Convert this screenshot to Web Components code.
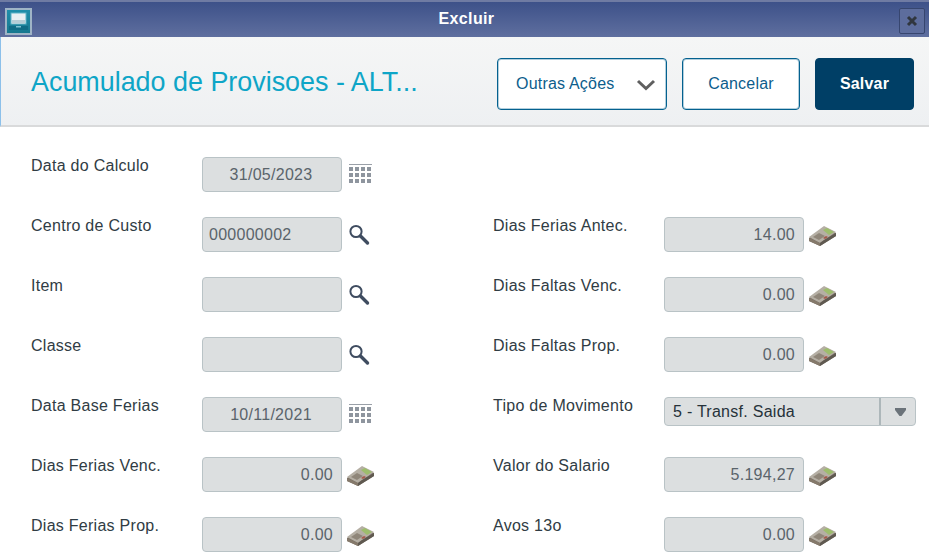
<!DOCTYPE html>
<html lang="pt">
<head>
<meta charset="utf-8">
<title>Excluir</title>
<style>
    html, body { margin: 0; height: 100%; overflow: hidden; background: #fff; }
    body { font-family: "Liberation Sans", Arial, sans-serif; }
    .form {
        display: grid;
        grid-template-columns: 462px 1fr;
        grid-auto-rows: 60px;
        padding: 30px 13px 0 31px;
    }
</style>
</head>
<body>
<template id="money-icon">
    <svg width="30" height="24" viewBox="0 0 30 24" style="margin-left:-1px">
        <path d="M2 15 L17 4 L29 10 L29 13 L13 23 L2 18 Z" fill="#7b7266"/>
        <path d="M2 14 L17 3 L29 9 L13 20 Z" fill="#b5afa4"/>
        <path d="M16 7 L20 5 L27 9 L22 12 Z" fill="#9dbd6c"/>
        <path d="M6 14 L12 10 L18 13 L12 17 Z" fill="#8f8679"/>
        <path d="M16 15 L19 13 L21 14 L18 16 Z" fill="#a5584a"/>
        <path d="M2 15 L13 20 L13 23 L2 18 Z" fill="#85796b"/>
        <path d="M17 17 L29 10 L29 13 L13 23 L13 20 Z" fill="#5f5950"/>
    </svg>
</template>
<template id="search-icon">
    <svg width="22" height="24" viewBox="0 0 22 24" style="margin-left:2px">
        <circle cx="8" cy="8.5" r="5.6" fill="#fff" fill-opacity=".55" stroke="#3f4c60" stroke-width="2"/>
        <path d="M12.5 13 L19.5 20" stroke="#3f4c60" stroke-width="3.4" stroke-linecap="round"/>
    </svg>
</template>
<template id="calendar-icon">
    <svg width="24" height="22" viewBox="0 0 24 22" fill="#8e959e" style="margin-left:3px">
        <rect x="0" y="1" width="23" height="1" fill="#9aa0a8"/>
        <path d="M0 4h4v4H0zM6 4h4v4H6zM12 4h4v4h-4zM18 4h4v4h-4zM0 10h4v4H0zM6 10h4v4H6zM12 10h4v4h-4zM18 10h4v4h-4zM0 16h4v4H0zM6 16h4v4H6zM12 16h4v4h-4zM18 16h4v4h-4z"/>
    </svg>
</template>

<title-bar>Excluir</title-bar>
<page-header heading="Acumulado de Provisoes - ALT...">
    <action-button menu>Outras Ações</action-button>
    <action-button style="width:118px">Cancelar</action-button>
    <action-button primary style="width:99px">Salvar</action-button>
</page-header>

<div class="form">
    <form-field label="Data do Calculo" value="31/05/2023" value-align="center" icon="calendar"></form-field>
    <div></div>
    <form-field label="Centro de Custo" value="000000002" icon="search"></form-field>
    <form-field label="Dias Ferias Antec." value="14.00" value-align="right" icon="money"></form-field>
    <form-field label="Item" icon="search"></form-field>
    <form-field label="Dias Faltas Venc." value="0.00" value-align="right" icon="money"></form-field>
    <form-field label="Classe" icon="search"></form-field>
    <form-field label="Dias Faltas Prop." value="0.00" value-align="right" icon="money"></form-field>
    <form-field label="Data Base Ferias" value="10/11/2021" value-align="center" icon="calendar"></form-field>
    <form-field label="Tipo de Movimento" value="5 - Transf. Saida" select></form-field>
    <form-field label="Dias Ferias Venc." value="0.00" value-align="right" icon="money"></form-field>
    <form-field label="Valor do Salario" value="5.194,27" value-align="right" icon="money"></form-field>
    <form-field label="Dias Ferias Prop." value="0.00" value-align="right" icon="money"></form-field>
    <form-field label="Avos 13o" value="0.00" value-align="right" icon="money"></form-field>
</div>

<script>
class TitleBar extends HTMLElement {
    constructor() {
        super();
        this.attachShadow({ mode: 'open' });
        this.shadowRoot.innerHTML = `
            <style>
                :host {
                    display: flex;
                    align-items: center;
                    justify-content: space-between;
                    box-sizing: border-box;
                    height: 37px;
                    padding: 3px 4px 0 5px;
                    border-top: 2px solid #6f7ba3;
                    background: linear-gradient(#3d5189, #5f6f9f);
                }
                .logo {
                    width: 27px;
                    height: 27px;
                    box-sizing: border-box;
                    border: 2px solid #9fb4c6;
                    background: linear-gradient(#1f8eaa, #17788f);
                    display: flex;
                    align-items: center;
                    justify-content: center;
                }
                .text {
                    color: #fff;
                    font-size: 16px;
                    letter-spacing: .35px;
                    font-weight: bold;
                    flex: 1;
                    text-align: center;
                    margin: -5px 0 0 2px;
                }
                .close {
                    width: 26px;
                    height: 26px;
                    box-sizing: border-box;
                    border: 1px solid #37466f;
                    border-radius: 2px;
                    background: #5d6d9d;
                    display: flex;
                    align-items: center;
                    justify-content: center;
                }
            </style>
            <div class="logo">
                <svg width="19" height="19" viewBox="0 0 19 19">
                    <rect x="2" y="1" width="15" height="11" fill="#e9eff2" stroke="#5fb4c8"/>
                    <rect x="3" y="8" width="13" height="3.5" fill="#b5cdd6"/>
                    <path d="M0 14h19v4H0z" fill="#0f6c86"/>
                    <path d="M7 14h5v1.5H7z" fill="#7fc2d3"/>
                </svg>
            </div>
            <div class="text"><slot></slot></div>
            <div class="close">
                <svg width="12" height="12" viewBox="0 0 12 12">
                    <path d="M2 2 L10 10 M10 2 L2 10" stroke="#30363f" stroke-width="3"/>
                </svg>
            </div>
        `;
    }
}

class PageHeader extends HTMLElement {
    constructor() {
        super();
        this.attachShadow({ mode: 'open' });
    }

    connectedCallback() {
        this.shadowRoot.innerHTML = `
            <style>
                :host {
                    display: flex;
                    align-items: center;
                    box-sizing: border-box;
                    height: 90px;
                    padding: 6px 15px 0 30px;
                    background: linear-gradient(#f5f6f6, #eef0f2);
                    border-bottom: 2px solid #d9dadb;
                    border-left: 1px solid #8cc0ea;
                }
                h1 {
                    flex: 1;
                    margin: -4px 0 0 0;
                    font-size: 26.9px;
                    font-weight: normal;
                    color: #0ea5c7;
                }
                .actions { display: flex; gap: 15px; }
            </style>
            <h1>${this.getAttribute('heading')}</h1>
            <div class="actions"><slot></slot></div>
        `;
    }
}

class ActionButton extends HTMLElement {
    constructor() {
        super();
        this.attachShadow({ mode: 'open' });
    }

    connectedCallback() {
        const chevron = this.hasAttribute('menu') ? `
            <svg class="chevron" width="20" height="12" viewBox="0 0 20 12">
                <path d="M2 2 L10 9.5 L18 2" fill="none" stroke="#5f5f5f" stroke-width="3"/>
            </svg>` : '';
        this.shadowRoot.innerHTML = `
            <style>
                :host {
                    display: flex;
                    align-items: center;
                    justify-content: center;
                    box-sizing: border-box;
                    height: 52px;
                    border: 1px solid #04618f;
                    box-shadow: inset 0 0 0 1px rgba(4, 97, 143, .3);
                    border-radius: 4px;
                    background: #fff;
                    color: #0c5d8c;
                    font-size: 16px;
                    letter-spacing: .2px;
                }
                :host([menu]) {
                    width: 170px;
                    justify-content: flex-start;
                    padding-left: 18px;
                    gap: 22px;
                }
                :host([primary]) {
                    background: #003f66;
                    border-color: #003f66;
                    box-shadow: none;
                    color: #fff;
                    font-weight: bold;
                }
                .chevron { margin-top: 1px; }
            </style>
            <slot></slot>${chevron}
        `;
    }
}

class FormField extends HTMLElement {
    constructor() {
        super();
        this.attachShadow({ mode: 'open' });
    }

    connectedCallback() {
        const value = this.getAttribute('value') || '';
        const icon = this.getAttribute('icon');
        const isSelect = this.hasAttribute('select');
        const tpl = icon ? document.getElementById(icon + '-icon').innerHTML : '';
        this.shadowRoot.innerHTML = `
            <style>
                :host {
                    display: grid;
                    grid-template-columns: 171px auto;
                    font-size: 16px;
                    letter-spacing: .27px;
                    height: 35px;
                }
                .label { color: #303c44; line-height: 18px; }
                .control { display: flex; align-items: flex-start; gap: 4px; }
                .box {
                    box-sizing: border-box;
                    width: 140px;
                    height: 35px;
                    line-height: 33px;
                    padding: 0 8px 0 6px;
                    background: #dcdfe0;
                    border: 1px solid #b9c3c6;
                    border-radius: 4px;
                    color: #5a646b;
                    white-space: nowrap;
                    text-align: ${this.getAttribute('value-align') || 'left'};
                }
                .select {
                    width: 252px;
                    height: 29px;
                    line-height: 27px;
                    color: #26323a;
                    display: flex;
                    justify-content: space-between;
                    padding: 0 0 0 8px;
                }
                .arrow {
                    box-sizing: border-box;
                    width: 36px;
                    padding-left: 4px;
                    border-left: 2px solid #adb7ba;
                    display: flex;
                    align-items: center;
                    justify-content: center;
                }
                .icon { display: flex; margin-top: 6px; }
            </style>
            <div class="label">${this.getAttribute('label')}</div>
            <div class="control">
                ${isSelect
                    ? `<div class="box select"><span>${value}</span><span class="arrow">
                        <svg width="11" height="8" viewBox="0 0 11 8"><path d="M0 0h11v2L6.5 8h-2L0 2z" fill="#6b737a"/></svg>
                       </span></div>`
                    : `<div class="box">${value}</div><div class="icon">${tpl}</div>`}
            </div>
        `;
    }
}

customElements.define('title-bar', TitleBar);
customElements.define('page-header', PageHeader);
customElements.define('action-button', ActionButton);
customElements.define('form-field', FormField);
</script>
</body>
</html>
